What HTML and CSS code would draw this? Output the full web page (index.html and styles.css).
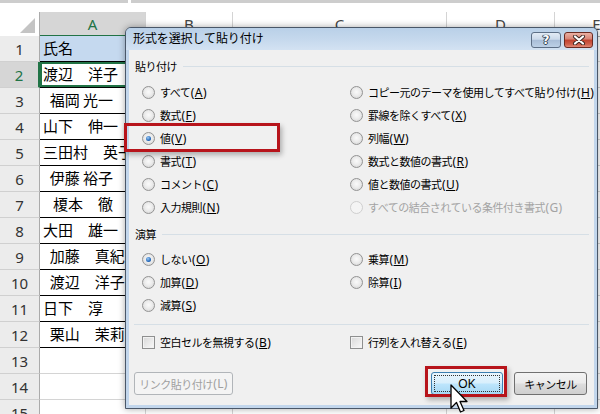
FILE: index.html
```html
<!DOCTYPE html>
<html lang="ja">
<head>
<meta charset="utf-8">
<title>形式を選択して貼り付け</title>
<link rel="stylesheet" href="styles.css">
</head>
<body>
<div class="app">
  <div class="topstrip"><span class="seg s1"></span><span class="seg s2"></span></div>
  <div class="sheet">
    <div class="row hdr">
      <div class="corner"><svg width="40" height="24" viewBox="0 0 40 24"><polygon points="35,6 35,21 20,21" fill="#c4c4c4"/></svg></div>
      <div class="ch sel">A</div><div class="ch">B</div><div class="ch">C</div><div class="ch">D</div><div class="ch">E</div>
    </div>
    <div class="row"><div class="rh">1</div><div class="c t head">氏名</div><div class="c"></div><div class="c"></div><div class="c"></div><div class="c"></div></div>
    <div class="row"><div class="rh sel">2</div><div class="c t active">渡辺　洋子</div><div class="c"></div><div class="c"></div><div class="c"></div><div class="c"></div></div>
    <div class="row"><div class="rh">3</div><div class="c t">  福岡 光一</div><div class="c"></div><div class="c"></div><div class="c"></div><div class="c"></div></div>
    <div class="row"><div class="rh">4</div><div class="c t">山下　伸一</div><div class="c"></div><div class="c"></div><div class="c"></div><div class="c"></div></div>
    <div class="row"><div class="rh">5</div><div class="c t">三田村　英子</div><div class="c"></div><div class="c"></div><div class="c"></div><div class="c"></div></div>
    <div class="row"><div class="rh">6</div><div class="c t">  伊藤 裕子</div><div class="c"></div><div class="c"></div><div class="c"></div><div class="c"></div></div>
    <div class="row"><div class="rh">7</div><div class="c t">   榎本　徹</div><div class="c"></div><div class="c"></div><div class="c"></div><div class="c"></div></div>
    <div class="row"><div class="rh">8</div><div class="c t">大田　雄一</div><div class="c"></div><div class="c"></div><div class="c"></div><div class="c"></div></div>
    <div class="row"><div class="rh">9</div><div class="c t">  加藤　真紀</div><div class="c"></div><div class="c"></div><div class="c"></div><div class="c"></div></div>
    <div class="row"><div class="rh">10</div><div class="c t">  渡辺　洋子</div><div class="c"></div><div class="c"></div><div class="c"></div><div class="c"></div></div>
    <div class="row"><div class="rh">11</div><div class="c t">日下　淳</div><div class="c"></div><div class="c"></div><div class="c"></div><div class="c"></div></div>
    <div class="row"><div class="rh">12</div><div class="c t">  栗山　茉莉</div><div class="c"></div><div class="c"></div><div class="c"></div><div class="c"></div></div>
    <div class="row"><div class="rh">13</div><div class="c"></div><div class="c"></div><div class="c"></div><div class="c"></div><div class="c"></div></div>
    <div class="row"><div class="rh">14</div><div class="c"></div><div class="c"></div><div class="c"></div><div class="c"></div><div class="c"></div></div>
    <div class="row"><div class="rh">15</div><div class="c"></div><div class="c"></div><div class="c"></div><div class="c"></div><div class="c"></div></div>
  </div>

  <div class="dialog">
    <div class="titlebar">
      <span class="title">形式を選択して貼り付け</span>
      <div class="ctrls">
        <span class="tb help">?</span>
        <span class="tb close"><svg width="16" height="10" viewBox="0 0 16 10"><path d="M4 1.5 L12 8.5 M12 1.5 L4 8.5" stroke="#3a2420" stroke-width="4" stroke-linecap="round"/><path d="M4 1.5 L12 8.5 M12 1.5 L4 8.5" stroke="#fff" stroke-width="2.2" stroke-linecap="round"/></svg></span>
      </div>
    </div>
    <div class="body">
      <div class="ghead">貼り付け</div>
      <div class="opts">
        <label class="opt"><span class="radio"></span><span>すべて<span class="k">(<u>A</u>)</span></span></label>
        <label class="opt"><span class="radio"></span><span>コピー元のテーマを使用してすべて貼り付け<span class="k">(<u>H</u>)</span></span></label>
        <label class="opt"><span class="radio"></span><span>数式<span class="k">(<u>F</u>)</span></span></label>
        <label class="opt"><span class="radio"></span><span>罫線を除くすべて<span class="k">(<u>X</u>)</span></span></label>
        <label class="opt"><span class="radio on"></span><span>値<span class="k">(<u>V</u>)</span></span></label>
        <label class="opt"><span class="radio"></span><span>列幅<span class="k">(<u>W</u>)</span></span></label>
        <label class="opt"><span class="radio"></span><span>書式<span class="k">(<u>T</u>)</span></span></label>
        <label class="opt"><span class="radio"></span><span>数式と数値の書式<span class="k">(<u>R</u>)</span></span></label>
        <label class="opt"><span class="radio"></span><span>コメント<span class="k">(<u>C</u>)</span></span></label>
        <label class="opt"><span class="radio"></span><span>値と数値の書式<span class="k">(<u>U</u>)</span></span></label>
        <label class="opt"><span class="radio"></span><span>入力規則<span class="k">(<u>N</u>)</span></span></label>
        <label class="opt disabled"><span class="radio"></span><span>すべての結合されている条件付き書式<span class="k">(G)</span></span></label>
      </div>
      <div class="ghead op">演算</div>
      <div class="opts ops">
        <label class="opt"><span class="radio on"></span><span>しない<span class="k">(<u>O</u>)</span></span></label>
        <label class="opt"><span class="radio"></span><span>乗算<span class="k">(<u>M</u>)</span></span></label>
        <label class="opt"><span class="radio"></span><span>加算<span class="k">(<u>D</u>)</span></span></label>
        <label class="opt"><span class="radio"></span><span>除算<span class="k">(<u>I</u>)</span></span></label>
        <label class="opt"><span class="radio"></span><span>減算<span class="k">(<u>S</u>)</span></span></label>
      </div>
      <div class="sep"></div>
      <div class="opts checks">
        <label class="opt"><span class="cb"></span><span>空白セルを無視する<span class="k">(<u>B</u>)</span></span></label>
        <label class="opt"><span class="cb"></span><span>行列を入れ替える<span class="k">(<u>E</u>)</span></span></label>
      </div>
      <div class="btns">
        <span class="btn disabled">リンク貼り付け<span class="k">(L)</span></span>
        <span class="btn ok"><span class="focus">OK</span></span>
        <span class="btn cancel">キャンセル</span>
      </div>
    </div>
    <div class="mark mark-value"></div>
    <div class="mark mark-ok"></div>
  </div>

  <svg class="cursor" width="20" height="32" viewBox="0 0 20 32"><path d="M1 1 L1 24 L6.5 18.5 L10.5 28 L14 26.5 L10 17.5 L17 17.5 Z" fill="#fff" stroke="#000" stroke-width="1.3" stroke-linejoin="round"/></svg>
</div>
</body>
</html>
```

FILE: styles.css
```css
* { box-sizing: border-box; }
html, body { margin: 0; padding: 0; }
body {
  width: 600px;
  height: 414px;
  overflow: hidden;
  background: #fff;
  font-family: "Noto Sans CJK JP", "Noto Sans", sans-serif;
}
.app {
  position: relative;
  width: 600px;
  height: 414px;
  overflow: hidden;
}

/* top strip */
.topstrip {
  height: 12px;
  display: flex;
  gap: 3px;
  align-items: flex-start;
  background: #fff;
}
.seg { height: 3px; background: #cdcdcd; }
.s1 { width: 128px; }
.s2 { flex: 1; }

/* sheet */
.row {
  display: grid;
  grid-template-columns: 40px 106px 87px 214px 108px 84px;
  height: 26px;
}
.row.hdr { height: 24px; }
.corner {
  background: #fff;
  border-right: 1px solid #ababab;
  border-bottom: 1px solid #ababab;
}
.corner svg { display: block; }
.ch {
  background: #fff;
  border-right: 1px solid #d4d4d4;
  border-bottom: 1px solid #ababab;
  display: flex;
  align-items: center;
  justify-content: center;
  font-family: "Noto Sans", sans-serif;
  font-size: 15px;
  color: #444;
}
.ch.sel {
  background: #d6d6d6;
  color: #217346;
  border-bottom: 2px solid #217346;
}
.rh {
  background: #ececec;
  border-right: 1px solid #ababab;
  border-bottom: 1px solid #d0d0d0;
  display: flex;
  align-items: center;
  justify-content: center;
  font-family: "Noto Sans", sans-serif;
  font-size: 15px;
  color: #333;
}
.rh.sel {
  background: #d6d6d6;
  color: #217346;
  border-right: 2px solid #217346;
}
.c {
  border-right: 1px solid #d4d4d4;
  border-bottom: 1px solid #d4d4d4;
}
.c.t {
  border-bottom: 1px solid #000;
  font-family: "Noto Sans CJK JP", sans-serif;
  font-size: 15px;
  line-height: 24px;
  padding-left: 3px;
  white-space: pre;
  overflow: hidden;
  color: #000;
}
.c.head { background: #c5d9ef; }
.c.active { box-shadow: inset 0 0 0 2px #217346; }

/* dialog */
.dialog {
  position: absolute;
  left: 125px;
  top: 27px;
  width: 473px;
  height: 382px;
  border: 1px solid #4a5768;
  border-radius: 6px 6px 0 0;
  background: #c2d6ec;
  padding: 0 3px 3px 3px;
  display: flex;
  flex-direction: column;
  box-shadow: 0 0 7px rgba(0, 0, 0, 0.35);
  font-family: "Noto Sans", "Noto Sans CJK JP", sans-serif;
}
.titlebar {
  height: 22px;
  margin: 0 -3px;
  padding: 0 4px 0 7px;
  display: flex;
  justify-content: space-between;
  align-items: flex-start;
  background: linear-gradient(#b9d0e8, #c6d9ed 55%, #d3e2f2);
  border-radius: 5px 5px 0 0;
}
.title {
  font-size: 12px;
  line-height: 22px;
  color: #000;
  letter-spacing: -0.1px;
}
.ctrls {
  display: flex;
  gap: 3px;
  margin-top: 4px;
}
.tb {
  height: 16px;
  border-radius: 3px;
  display: flex;
  align-items: center;
  justify-content: center;
}
.help {
  width: 30px;
  border: 1px solid #5d6f86;
  background: linear-gradient(#e2ebf5, #cbd9ea 45%, #a9bed8 52%, #bcd0e6);
  color: #fff;
  font-family: "DejaVu Sans", sans-serif;
  font-weight: bold;
  font-size: 12px;
  text-shadow: 0 0 1px #2f3b4a, 0 0 1px #2f3b4a, 1px 0 0 #3a4a5e, -1px 0 0 #3a4a5e, 0 1px 0 #3a4a5e;
}
.close {
  width: 29px;
  border: 1px solid #6b2b22;
  background: linear-gradient(#ebb0a3, #d88577 42%, #c24430 52%, #cf604c 80%, #e08a78);
}
.close svg { display: block; }

.body {
  flex: 1;
  background: #f0f0f0;
  padding: 0 5px 0 5px;
  font-size: 11px;
  letter-spacing: -0.5px;
  color: #000;
}
.k {
  font-size: 12px;
  letter-spacing: 0.4px;
  margin-left: 0.5px;
}
.ghead {
  height: 16px;
  margin-top: 8px;
  padding-left: 1px;
  display: flex;
  align-items: center;
  gap: 6px;
}
.ghead::after {
  content: "";
  flex: 1;
  height: 1px;
  background: #d6dfe6;
}
.ghead.op { margin-top: 7px; }
.opts {
  display: grid;
  grid-template-columns: 208px 1fr;
  grid-auto-rows: 23px;
  margin-top: 7px;
  padding-left: 8px;
}
.opts.ops { margin-top: 6px; grid-template-rows: repeat(3, 23px); }
.opts.checks { margin-top: 6px; }
.opt {
  display: flex;
  align-items: center;
  gap: 5px;
  white-space: nowrap;
}
.opt.disabled { color: #a3a3a3; }
u { text-underline-offset: 1px; }
.radio {
  flex: none;
  position: relative;
  width: 13px;
  height: 13px;
  border-radius: 50%;
  border: 1px solid #939393;
  background: radial-gradient(circle at 50% 45%, #fafafa 0, #ececec 45%, #cfcfcf 100%);
}
.opt.disabled .radio {
  border-color: #cfcfcf;
  background: #f4f4f4;
}
.radio.on::after {
  content: "";
  position: absolute;
  left: 3px;
  top: 3px;
  width: 5px;
  height: 5px;
  border-radius: 50%;
  background: radial-gradient(circle at 40% 35%, #9ccaf5, #1e64b8 65%, #0e3c78);
}
.cb {
  flex: none;
  width: 13px;
  height: 13px;
  border: 1px solid #8e8f8f;
  background: linear-gradient(135deg, #d8d8d8, #f9f9f9);
  box-shadow: inset 0 0 0 1px #f2f2f2;
}
.sep {
  height: 1px;
  margin: 7px 0 0 0;
  background: #d6dfe6;
}
.btns {
  display: flex;
  margin-top: 18px;
  padding: 0 2px 0 0;
}
.btn {
  height: 23px;
  border: 1px solid #707070;
  border-radius: 3px;
  display: flex;
  align-items: center;
  justify-content: center;
  font-size: 11px;
  background: linear-gradient(#f3f3f3, #ebebeb 48%, #dddddd 52%, #cfcfcf);
}
.btn.disabled {
  width: 99px;
  border-color: #b1b5b9;
  background: #f4f4f4;
  color: #a0a0a0;
}
.btn.ok {
  width: 72px;
  margin-left: auto;
  border-color: #3c7fb1;
  background: linear-gradient(#e9f5fd, #d8effc 48%, #bde5fc 52%, #a6d8f4);
  padding: 2px;
}
.btn.ok .focus {
  width: 100%;
  height: 100%;
  display: flex;
  align-items: center;
  justify-content: center;
  border: 1px dotted #333;
  font-family: "Liberation Sans", sans-serif;
  font-size: 12px;
  letter-spacing: 0;
}
.btn.cancel {
  width: 73px;
  margin-left: 11px;
}

.mark {
  position: absolute;
  border: 3px solid #b7141b;
  box-shadow: 2px 3px 5px rgba(0, 0, 0, 0.28);
}
.mark-value { left: -2px; top: 95px; width: 156px; height: 29px; }
.mark-ok { left: 299px; top: 338px; width: 82px; height: 31px; }

.cursor {
  position: absolute;
  left: 450px;
  top: 384px;
}
```
